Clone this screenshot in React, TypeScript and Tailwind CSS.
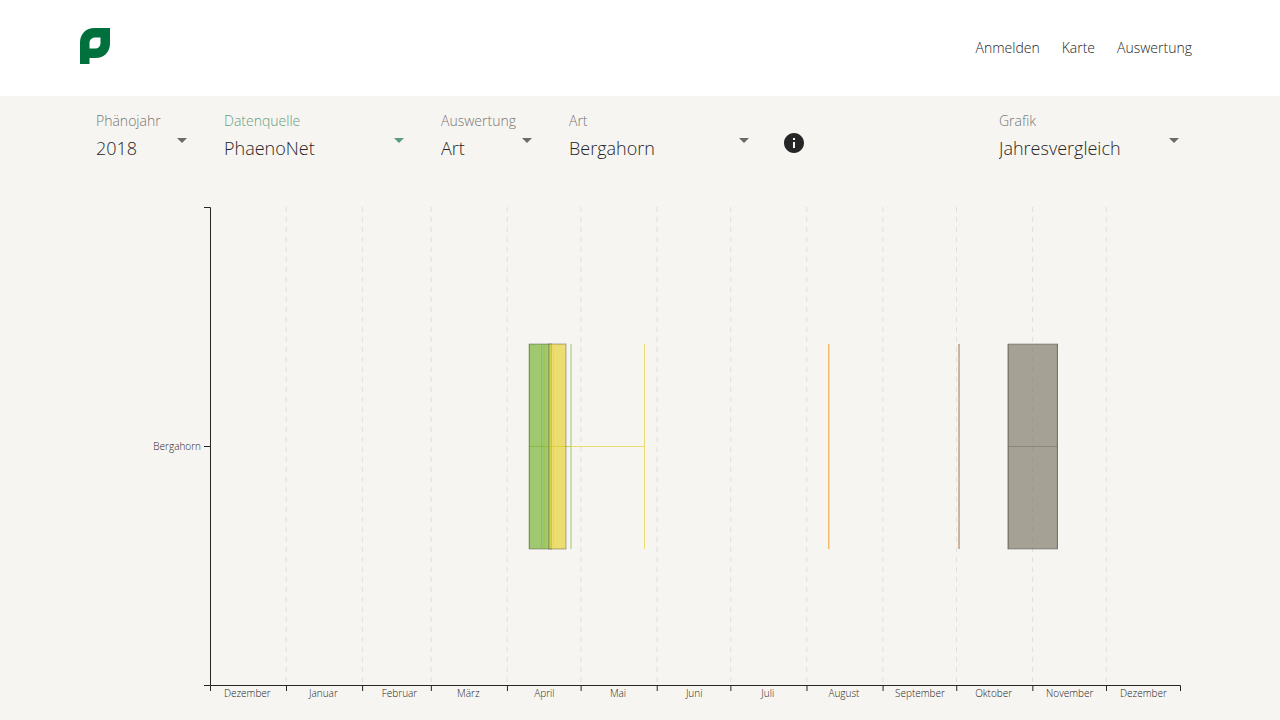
import { useId } from "react";

const navLinks = ["Anmelden", "Karte", "Auswertung"];

const MARGIN = { left: 114, top: 31 };
const PLOT = { width: 970, height: 478 };
const TOTAL_DAYS = 395.1;
const BAND = { top: 137, height: 205 };
const MIDDLE = 239;
const LABEL_OFFSET_DAYS = 15;

const months = [
  { name: "Dezember", days: 31 },
  { name: "Januar", days: 31 },
  { name: "Februar", days: 28 },
  { name: "März", days: 31 },
  { name: "April", days: 30 },
  { name: "Mai", days: 31 },
  { name: "Juni", days: 30 },
  { name: "Juli", days: 31 },
  { name: "August", days: 31 },
  { name: "September", days: 30 },
  { name: "Oktober", days: 31 },
  { name: "November", days: 30 },
  { name: "Dezember", days: 30 },
];

const dayToX = (day: number) => (day / TOTAL_DAYS) * PLOT.width;

let elapsed = 0;
const ticks = months.map(({ name, days }) => {
  const tick = { name, x: dayToX(elapsed) + 0.2, labelX: dayToX(elapsed + LABEL_OFFSET_DAYS) };
  elapsed += days;
  return tick;
});

type Phase = {
  color: string;
  min: number;
  q1: number;
  median: number;
  q3: number;
  max: number;
};

const phases: Phase[] = [
  { color: "#7ab536", min: 319.3, q1: 319.3, median: 331.5, q3: 341.5, max: 361 },
  { color: "#e5d338", min: 334, q1: 338.9, median: 343.5, q3: 356, max: 434.5 },
  { color: "#eda428", min: 618.8, q1: 618.8, median: 618.8, q3: 618.8, max: 618.8 },
  { color: "#a07a50", min: 749, q1: 749, median: 749, q3: 749, max: 749 },
  { color: "#827d6e", min: 798.2, q1: 798.2, median: 798.2, q3: 847.4, max: 847.4 },
];

function VerticalLine({ x, color, opacity }: { x: number; color: string; opacity: number }) {
  return (
    <line x1={x} x2={x} y1={BAND.top} y2={BAND.top + BAND.height} stroke={color} strokeOpacity={opacity} />
  );
}

function Whiskers({ color, min, max }: Phase) {
  return (
    <g>
      {max > min && (
        <line x1={min} x2={max} y1={MIDDLE + 0.5} y2={MIDDLE + 0.5} stroke={color} strokeOpacity="0.7" />
      )}
      {[...new Set([min, max])].map((x) => (
        <VerticalLine key={x} x={x} color={color} opacity={0.7} />
      ))}
    </g>
  );
}

function Box({ color, q1, median, q3 }: Phase) {
  return (
    <g>
      {q3 > q1 && (
        <rect
          x={q1}
          y={BAND.top}
          width={q3 - q1}
          height={BAND.height}
          fill={color}
          fillOpacity="0.7"
          stroke="#262626"
          strokeOpacity="0.36"
        />
      )}
      <VerticalLine x={median} color={color} opacity={0.5} />
    </g>
  );
}

function Chart() {
  return (
    <svg viewBox="0 0 1088 544" className="block h-auto w-full" role="img" aria-label="Jahresvergleich">
      <g transform={`translate(${MARGIN.left} ${MARGIN.top})`}>
        {ticks.slice(1).map(({ x }) => (
          <line
            key={x}
            x1={x}
            x2={x}
            y1="0"
            y2={PLOT.height}
            stroke="#262626"
            strokeOpacity="0.1"
            strokeDasharray="5 5"
          />
        ))}
        {phases.map((p) => (
          <Whiskers key={p.color} {...p} />
        ))}
        {phases.map((p) => (
          <Box key={p.color} {...p} />
        ))}
        <path d={`M-6 0.5H0.5V${PLOT.height + 0.5}H-6`} fill="none" stroke="#262626" />
        <line x1="-6" x2="0" y1={MIDDLE + 0.5} y2={MIDDLE + 0.5} stroke="#262626" />
        <text x="-9" y={MIDDLE + 4} textAnchor="end" className="fill-[#262626] text-[10px]">
          Bergahorn
        </text>
        <path
          d={`M0.5 ${PLOT.height + 6}V${PLOT.height + 0.5}H${PLOT.width + 0.5}V${PLOT.height + 6}`}
          fill="none"
          stroke="#262626"
        />
        {ticks.map(({ name, x, labelX }, i) => (
          <g key={x}>
            {i > 0 && <line x1={x + 0.2} x2={x + 0.2} y1={PLOT.height} y2={PLOT.height + 6} stroke="#262626" />}
            <text
              x={labelX + 0.5}
              y={PLOT.height + 12}
              textAnchor="middle"
              className="fill-[#262626] text-[10px]"
            >
              {name}
            </text>
          </g>
        ))}
      </g>
    </svg>
  );
}

type FieldProps = { label: string; value: string; width: string; active?: boolean };

function SelectField({ label, value, width, active = false }: FieldProps) {
  const id = useId();
  return (
    <div className={`relative flex h-14 flex-col pl-4 ${width}`}>
      <label htmlFor={id} className={`text-sm ${active ? "text-[#5f9f7f]" : "text-[#757573]"}`}>
        {label}
      </label>
      <select
        id={id}
        defaultValue={value}
        className="mt-[3px] h-7 w-full appearance-none bg-transparent pr-8 text-lg font-light text-[#262626] outline-none"
      >
        <option>{value}</option>
      </select>
      <svg
        viewBox="0 0 10 5"
        aria-hidden="true"
        className={`pointer-events-none absolute top-[27px] right-[13px] h-[5px] w-[10px] ${
          active ? "fill-[#5a9c7b]" : "fill-[#6b6b69]"
        }`}
      >
        <path d="M0 0h10L5 5z" />
      </svg>
    </div>
  );
}

export default function App() {
  return (
    <div className="min-h-screen bg-[#f7f5f1] font-['Open_Sans',sans-serif] font-light text-[#262626]">
      <header className="flex h-24 items-center justify-between bg-white pr-[88px] pl-20">
        <a href="#" aria-label="PhaenoNet" className="-mt-1 block">
          <svg viewBox="0 0 30 36" className="h-9 w-[30px]" aria-hidden="true">
            <path
              fill="#00703c"
              fillRule="evenodd"
              d="M30 0v15.500C30 24 24 30 15.500 30H9.500v6H0V14.500C0 6 6 0 14.500 0zM20.500 9.500h-5.200C11.600 9.500 9.500 11.700 9.500 15.300v5.200h5.200c3.700 0 5.800-2.200 5.800-5.800z"
            />
          </svg>
        </a>
        <nav className="flex gap-[22px] text-sm">
          {navLinks.map((item) => (
            <a key={item} href="#">
              {item}
            </a>
          ))}
        </nav>
      </header>
      <main>
        <div className="flex h-20 items-start justify-between pt-[15px] pr-[88px] pl-20">
          <div className="flex gap-2">
            <SelectField label="Phänojahr" value="2018" width="w-[120px]" />
            <SelectField label="Datenquelle" value="PhaenoNet" width="w-[209px]" active />
            <SelectField label="Auswertung" value="Art" width="w-[120px]" />
            <SelectField label="Art" value="Bergahorn" width="w-[209px]" />
            <button type="button" aria-label="Information" className="mt-2 flex size-12 items-center justify-center">
              <svg viewBox="0 0 24 24" className="size-6 fill-[#262626]" aria-hidden="true">
                <path d="M12 2C6.480 2 2 6.480 2 12s4.480 10 10 10 10-4.480 10-10S17.520 2 12 2zm1 15h-2v-6h2v6zm0-8h-2V7h2v2z" />
              </svg>
            </button>
          </div>
          <SelectField label="Grafik" value="Jahresvergleich" width="w-[209px]" />
        </div>
        <div className="px-24">
          <Chart />
        </div>
      </main>
    </div>
  );
}
